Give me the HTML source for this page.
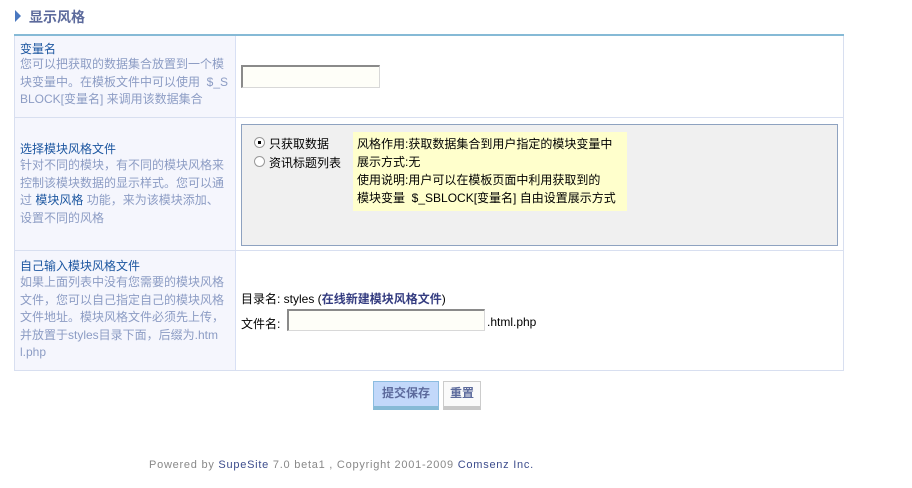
<!DOCTYPE html>
<html><head><meta charset="utf-8"><style>
*{margin:0;padding:0;box-sizing:border-box}
body{width:912px;height:488px;background:#fff;position:relative;font-family:"Liberation Sans","WenQuanYi Zen Hei","Noto Sans CJK SC",sans-serif;font-size:12px;overflow:hidden}
.a{position:absolute;white-space:nowrap}
.lbl{color:#1c56a0}
.d{color:#8c9cc4;line-height:17.5px}
</style></head><body>
<svg class="a" style="left:14px;top:10px" width="8" height="12"><polygon points="1,0 7,6 1,12" fill="#4a78c0"/></svg>
<div class="a" style="left:29px;top:7px;font-size:14px;font-weight:bold;color:#5c6a9c">显示风格</div>
<div class="a" style="left:14px;top:34px;width:830px;height:2px;background:#86bad6"></div>
<div class="a" style="left:14px;top:36px;width:222px;height:335px;background:#f5f6fd;border-left:1px solid #d8dff0;border-right:1px solid #d8e0f4"></div>
<div class="a" style="left:843px;top:36px;width:1px;height:335px;background:#d8dff0"></div>
<div class="a" style="left:14px;top:117px;width:830px;height:1px;background:#d8dff0"></div>
<div class="a" style="left:14px;top:250px;width:830px;height:1px;background:#d8dff0"></div>
<div class="a" style="left:14px;top:370px;width:830px;height:1px;background:#d8dff0"></div>

<div class="a lbl" style="left:20px;top:40px">变量名</div>
<div class="a d" style="left:20px;top:56px">您可以把获取的数据集合放置到一个模<br>块变量中。在模板文件中可以使用 &nbsp;$_S<br>BLOCK[变量名] 来调用该数据集合</div>
<div class="a" style="left:241px;top:65px;width:139px;height:23px;background:#fefef8;border:1px solid #d8d8d8;border-top:2px solid #8a8a8a;border-left:2px solid #8a8a8a"></div>

<div class="a lbl" style="left:20px;top:140px">选择模块风格文件</div>
<div class="a d" style="left:20px;top:157px">针对不同的模块，有不同的模块风格来<br>控制该模块数据的显示样式。您可以通<br>过 <span style="color:#1c56a0">模块风格</span> 功能，来为该模块添加、<br>设置不同的风格</div>
<div class="a" style="left:241px;top:124px;width:597px;height:122px;background:#f0f0f0;border:1px solid #8ea2c0"></div>
<div class="a" style="left:254px;top:137px;width:11px;height:11px;border-radius:50%;border:1px solid #999;background:#fff"></div>
<div class="a" style="left:258px;top:141px;width:3px;height:3px;background:#000"></div>
<div class="a" style="left:254px;top:156px;width:11px;height:11px;border-radius:50%;border:1px solid #999;background:#fff"></div>
<div class="a" style="left:269px;top:135px;color:#000">只获取数据</div>
<div class="a" style="left:269px;top:154px;color:#000">资讯标题列表</div>
<div class="a" style="left:353px;top:132px;width:274px;height:79px;background:#ffffcc"></div>
<div class="a" style="left:357px;top:135px;line-height:18px;color:#000">风格作用:获取数据集合到用户指定的模块变量中<br>展示方式:无<br>使用说明:用户可以在模板页面中利用获取到的<br>模块变量 &nbsp;$_SBLOCK[变量名] 自由设置展示方式</div>

<div class="a lbl" style="left:20px;top:257px">自己输入模块风格文件</div>
<div class="a d" style="left:20px;top:274px">如果上面列表中没有您需要的模块风格<br>文件，您可以自己指定自己的模块风格<br>文件地址。模块风格文件必须先上传，<br>并放置于styles目录下面，后缀为.htm<br>l.php</div>
<div class="a" style="left:241px;top:290px;color:#000">目录名: styles (<b style="color:#343c80">在线新建模块风格文件</b>)</div>
<div class="a" style="left:241px;top:315px;color:#000">文件名:</div>
<div class="a" style="left:287px;top:309px;width:198px;height:22px;background:#fefef8;border:1px solid #d8d8d8;border-top:2px solid #8a8a8a;border-left:2px solid #8a8a8a"></div>
<div class="a" style="left:487px;top:315px;color:#000">.html.php</div>

<div class="a" style="left:373px;top:381px;width:66px;height:29px;background:#c2d8fa;border:1px solid #8cbce0;border-bottom:4px solid #86bad6;color:#5c6a9c;font-weight:bold;text-align:center;line-height:23px">提交保存</div>
<div class="a" style="left:443px;top:381px;width:38px;height:29px;background:#fafafa;border:1px solid #ccc;border-bottom:4px solid #c8c8c8;color:#5c6a9c;font-weight:bold;text-align:center;line-height:23px">重置</div>

<div class="a" style="left:149px;top:459px;font-size:11px;color:#888;letter-spacing:0.75px">Powered by <span style="color:#3c4c8c">SupeSite</span> 7.0 beta1 , Copyright 2001-2009 <span style="color:#3c4c8c">Comsenz Inc.</span></div>
</body></html>
